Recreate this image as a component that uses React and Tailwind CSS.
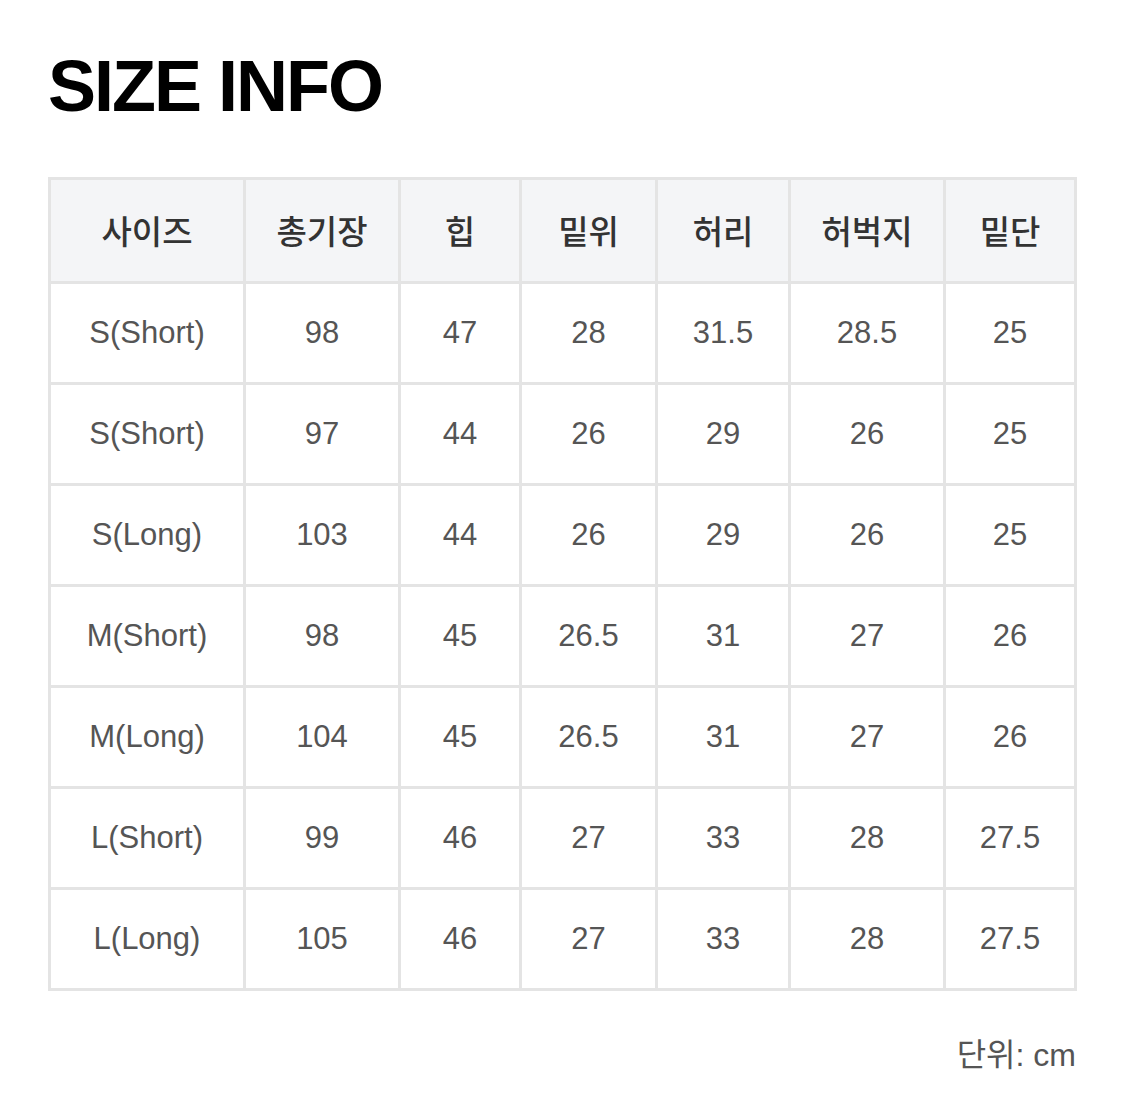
import React from 'react';

const headers = ['사이즈', '총기장', '힙', '밑위', '허리', '허벅지', '밑단'];

const rows = [
    ['S(Short)', '98', '47', '28', '31.5', '28.5', '25'],
    ['S(Short)', '97', '44', '26', '29', '26', '25'],
    ['S(Long)', '103', '44', '26', '29', '26', '25'],
    ['M(Short)', '98', '45', '26.5', '31', '27', '26'],
    ['M(Long)', '104', '45', '26.5', '31', '27', '26'],
    ['L(Short)', '99', '46', '27', '33', '28', '27.5'],
    ['L(Long)', '105', '46', '27', '33', '28', '27.5'],
];

const colWidths = ['w-[195px]', 'w-[155px]', 'w-[121px]', 'w-[136px]', 'w-[133px]', 'w-[155px]', 'w-[131px]'];

export default function App() {
    return (
        <div className="min-h-[1104px] w-[1125px] bg-white pl-[48px] pr-[49px] pt-[50px] font-['Liberation_Sans','Noto_Sans_CJK_KR',sans-serif]">
            <h1 className="text-[72px] font-bold leading-none tracking-[-2px] text-black">SIZE INFO</h1>

            {/* size table */}
            <table className="mt-[55px] w-[1026px] table-fixed border-collapse border-[3px] border-[#e4e4e4] text-center">
                <colgroup>
                    {colWidths.map((w, i) => (
                        <col key={i} className={w} />
                    ))}
                </colgroup>
                <thead>
                    <tr className="h-[104px] bg-[#f4f5f7]">
                        {headers.map((h) => (
                            <th key={h} className="border-[3px] border-[#e4e4e4] p-0 text-[33px] font-medium text-[#333] font-['Noto_Sans_CJK_KR',sans-serif]">
                                {h}
                            </th>
                        ))}
                    </tr>
                </thead>
                <tbody>
                    {rows.map((row, r) => (
                        <tr key={r} className="h-[101px]">
                            {row.map((cell, c) => (
                                <td key={c} className="border-[3px] border-[#e4e4e4] p-0 text-[31px] text-[#555]">
                                    {cell}
                                </td>
                            ))}
                        </tr>
                    ))}
                </tbody>
            </table>

            <div className="mt-[40px] text-right text-[32px] text-[#555] font-['Liberation_Sans','Noto_Sans_CJK_KR',sans-serif]">단위: cm</div>
        </div>
    );
}
